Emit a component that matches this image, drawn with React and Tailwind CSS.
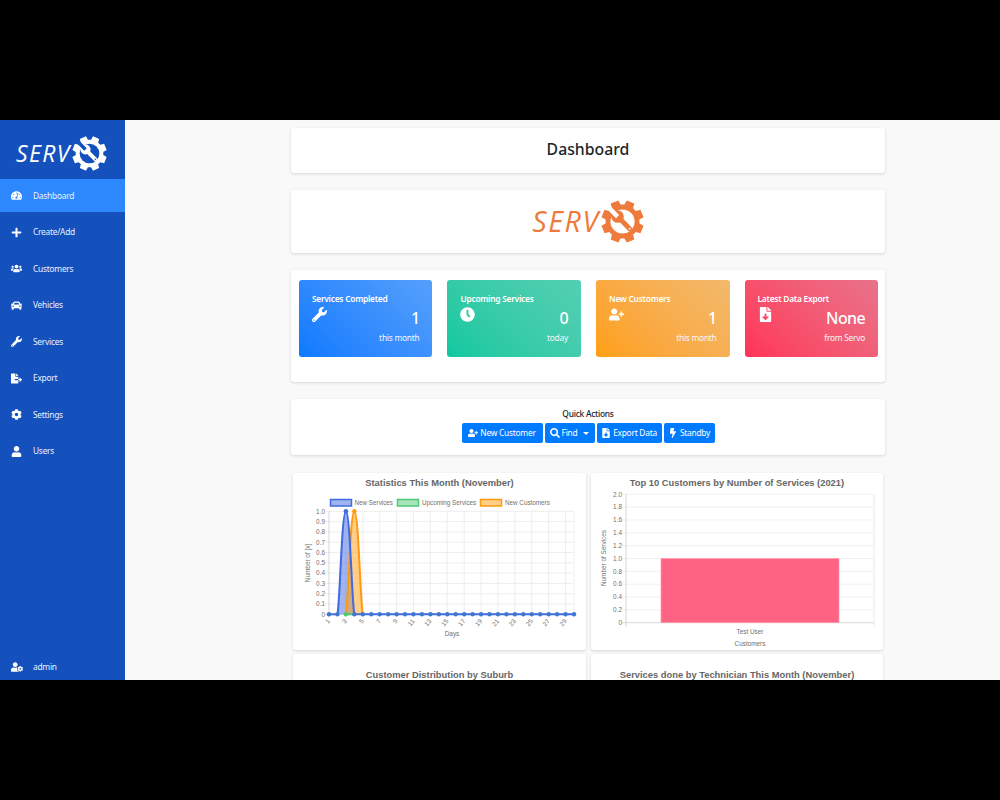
import React from "react";
import {
  FaTachometerAlt, FaPlus, FaUsers, FaCar, FaWrench, FaFileExport, FaCog, FaUser, FaUserCog,
  FaClock, FaUserPlus, FaFileDownload, FaSearch, FaBolt,
} from "react-icons/fa";

const gearPath = (() => {
  const n = 8, R = 24, r = 19;
  let d = "";
  for (let i = 0; i < n; i++) {
    const a = (i * 2 * Math.PI) / n + Math.PI / 8;
    const p = (rad, off) => `${(rad * Math.cos(a + off)).toFixed(2)} ${(rad * Math.sin(a + off)).toFixed(2)}`;
    d += `${i === 0 ? "M" : "L"}${p(r, -0.28)} L${p(R, -0.19)} L${p(R, 0.19)} L${p(r, 0.28)} `;
  }
  return d + "Z";
})();

function Gear({ color, hole, size, className }) {
  return (
    <svg viewBox="-24 -24 48 48" width={size} height={size} className={className}>
      <path d={gearPath} fill={color} />
      <circle r="13.5" fill={hole} />
      <line x1="-3" y1="-3" x2="8" y2="8" stroke={color} strokeWidth="5.5" strokeLinecap="round" />
      <circle cx="-5.5" cy="-5.5" r="7" fill={color} />
      <line x1="-5.5" y1="-5.5" x2="-14" y2="-14" stroke={hole} strokeWidth="5" />
      <circle cx="8" cy="8" r="1" fill={hole} />
    </svg>
  );
}

const nav = [
  ["Dashboard", FaTachometerAlt, true],
  ["Create/Add", FaPlus],
  ["Customers", FaUsers],
  ["Vehicles", FaCar],
  ["Services", FaWrench],
  ["Export", FaFileExport],
  ["Settings", FaCog],
  ["Users", FaUser],
];

const SMALL = "text-[8.4px] tracking-[-0.25px]";

function NavRow({ label, Icon, active }) {
  return (
    <div className={`flex items-center h-[33px] mb-[3.5px] ${active ? "bg-[#2e88fd]" : ""}`}>
      <span className="w-[33px] flex justify-center pr-[1px] text-white">
        <Icon className="w-[11px] h-[11px]" />
      </span>
      <span className={`${SMALL} pt-[1px] text-[#e9f0ff]`}>{label}</span>
    </div>
  );
}

function Sidebar() {
  return (
    <aside className="w-[125px] shrink-0 bg-[#1551bd] flex flex-col">
      <div className="h-[59px] flex items-center pl-[16px] pt-[8px] shrink-0">
        <span className="text-white italic text-[23px] font-medium leading-none tracking-[1.4px] font-['Open_Sans',sans-serif]">SERV</span>
        <Gear color="#ffffff" hole="#1551bd" size={35} className="ml-[1px]" />
      </div>
      {nav.map(([l, I, a]) => (
        <NavRow key={l} label={l} Icon={I} active={a} />
      ))}
      <div className="mt-auto flex items-center h-[27px]">
        <span className="w-[33px] flex justify-center text-white">
          <FaUserCog className="w-[12px] h-[12px]" />
        </span>
        <span className={`${SMALL} pt-[1px] text-[#e9f0ff]`}>admin</span>
      </div>
    </aside>
  );
}

function Panel({ className = "", children }) {
  return <div className={`bg-white rounded-[3px] shadow-[0_1px_3px_rgba(0,0,0,0.14)] ${className}`}>{children}</div>;
}

const stats = [
  { t: "Services Completed", I: FaWrench, v: "1", s: "this month", c: "from-[#0a7aff] to-[#549ffb]" },
  { t: "Upcoming Services", I: FaClock, v: "0", s: "today", c: "from-[#0cc8a0] to-[#53cfb2]" },
  { t: "New Customers", I: FaUserPlus, v: "1", s: "this month", c: "from-[#ff9f10] to-[#f1b96b]" },
  { t: "Latest Data Export", I: FaFileDownload, v: "None", s: "from Servo", c: "from-[#ff3158] to-[#e7728a]" },
];

function StatCard({ t, I, v, s, c }) {
  return (
    <div className={`h-[77px] rounded-[3px] bg-linear-45 ${c} text-white pt-[13px] px-[13px] flex flex-col`}>
      <div className={`${SMALL} font-semibold leading-[11px]`}>{t}</div>
      <div className="flex justify-between items-start h-[22px] mt-[2px]">
        <I className="h-[15px] w-auto mt-[1px]" />
        <span className="text-[16px] tracking-[-0.6px] font-medium leading-[22px] mt-[1px]">{v}</span>
      </div>
      <div className={`text-right ${SMALL} leading-[12px] mt-[4px] text-[#f4f7ff]`}>{s}</div>
    </div>
  );
}

function Btn({ Icon, children, caret, w }) {
  return (
    <span className={`h-[20px] ${w} bg-[#007bff] rounded-[2px] text-white ${SMALL} flex items-center justify-center gap-[2px]`}>
      <Icon className="h-[10px] w-auto" />
      {children}
      {caret && <span className="ml-[4px] w-0 h-0 border-x-[3px] border-x-transparent border-t-[3px] border-t-white" />}
    </span>
  );
}

const CT = "font-['Liberation_Sans',Arial,sans-serif] font-bold text-[9.35px] text-[#666] text-center leading-[14px]";
const svgFont = { fontFamily: "'Liberation Sans', Arial, sans-serif", fill: "#707070" };

function LineChart() {
  const x0 = 329, x1 = 574, y0 = 614.3, yT = 511.3;
  const dx = (x1 - x0) / 29;
  const X = (d) => x0 + (d - 1) * dx;
  const yTicks = ["1.0", "0.9", "0.8", "0.7", "0.6", "0.5", "0.4", "0.3", "0.2", "0.1", "0"];
  const peak = (d) =>
    `M${X(d - 1)} ${y0} C${X(d - 1) + 2.5} ${y0 - 12} ${X(d) - 4.2} ${yT} ${X(d)} ${yT} C${X(d) + 4.2} ${yT} ${X(d + 1) - 2.5} ${y0 - 12} ${X(d + 1)} ${y0}`;
  return (
    <svg viewBox="293 490 293 160" width="293" height="160" className="block">
      {yTicks.map((t, i) => {
        const y = yT + (i * (y0 - yT)) / 10;
        return (
          <g key={t}>
            <line x1={x0 - 4} x2={x1} y1={y} y2={y} stroke={i === 10 ? "#ccc" : "#eaeaea"} strokeWidth="0.8" />
            <text x={x0 - 4} y={y + 2.3} textAnchor="end" fontSize="6.4" style={svgFont}>{t}</text>
          </g>
        );
      })}
      {Array.from({ length: 15 }, (_, i) => {
        const x = X(1 + i * 2);
        return (
          <g key={i}>
            <line x1={x} x2={x} y1={yT} y2={y0 + 3} stroke={i === 0 ? "#ccc" : "#eaeaea"} strokeWidth="0.8" />
            <text transform={`translate(${x + 1.5} ${y0 + 7}) rotate(-50)`} textAnchor="end" fontSize="6.4" style={svgFont}>{1 + i * 2}</text>
          </g>
        );
      })}
      <line x1={x1} x2={x1} y1={yT} y2={y0 + 3} stroke="#eaeaea" strokeWidth="0.8" />

      <path d={peak(3) + "Z"} fill="rgba(65,105,225,0.5)" />
      <path d={peak(4) + "Z"} fill="rgba(255,159,16,0.5)" />
      <path d={peak(4)} fill="none" stroke="#ff9a10" strokeWidth="2" />
      <line x1={X(3)} x2={X(4)} y1={y0} y2={y0} stroke="#4fc878" strokeWidth="2" />
      <path d={`M${x0} ${y0} L${X(2)} ${y0}`} stroke="#4169e1" strokeWidth="2" />
      <path d={peak(3)} fill="none" stroke="#4169e1" strokeWidth="2" />
      <path d={`M${X(4)} ${y0} L${x1} ${y0}`} stroke="#4169e1" strokeWidth="2" />
      {Array.from({ length: 30 }, (_, i) => (
        <circle key={i} cx={X(i + 1)} cy={i === 2 ? yT : y0} r="2.2" fill={i === 2 ? "#4169e1" : "#3f78cf"} />
      ))}
      <circle cx={X(3)} cy={y0} r="2.2" fill="#4fc878" />
      <circle cx={X(4)} cy={yT} r="2.2" fill="#ff9a10" />

      {[
        [330.5, 354.5, "New Services", "#4169e1", "rgba(65,105,225,0.5)"],
        [397.5, 422, "Upcoming Services", "#4fc878", "rgba(79,200,120,0.5)"],
        [480.5, 505, "New Customers", "#ff9a10", "rgba(255,159,16,0.5)"],
      ].map(([bx, tx, t, s, f]) => (
        <g key={t}>
          <rect x={bx} y={499.5} width="21" height="6.5" fill={f} stroke={s} strokeWidth="1.5" />
          <text x={tx} y={505} fontSize="6.3" style={svgFont}>{t}</text>
        </g>
      ))}
      <text x={452} y={635.5} textAnchor="middle" fontSize="6.4" style={svgFont}>Days</text>
      <text transform="translate(309.5 563) rotate(-90)" textAnchor="middle" fontSize="6.4" style={svgFont}>Number of [x]</text>
    </svg>
  );
}

function BarChart() {
  const x0 = 626, x1 = 874, y0 = 622.7, yT = 494.3;
  const yTicks = ["2.0", "1.8", "1.6", "1.4", "1.2", "1.0", "0.8", "0.6", "0.4", "0.2", "0"];
  return (
    <svg viewBox="591 490 292 160" width="292" height="160" className="block">
      {yTicks.map((t, i) => {
        const y = yT + (i * (y0 - yT)) / 10;
        return (
          <g key={t}>
            <line x1={x0 - 4} x2={x1} y1={y} y2={y} stroke={i === 10 ? "#ccc" : "#eee"} strokeWidth="0.8" />
            <text x={x0 - 4} y={y + 2.3} textAnchor="end" fontSize="6.4" style={svgFont}>{t}</text>
          </g>
        );
      })}
      <line x1={x0} x2={x0} y1={yT} y2={y0 + 4} stroke="#ccc" strokeWidth="0.8" />
      <line x1={x1} x2={x1} y1={yT} y2={y0 + 4} stroke="#e4e4e4" strokeWidth="0.8" />
      <rect x={661} y={558.5} width={178} height={y0 - 558.5} fill="#ff6384" stroke="#ff9fb3" strokeWidth="0.7" />
      <text x={750} y={633.5} textAnchor="middle" fontSize="6.4" style={svgFont}>Test User</text>
      <text x={750} y={646} textAnchor="middle" fontSize="6.4" style={svgFont}>Customers</text>
      <text transform="translate(606 558) rotate(-90)" textAnchor="middle" fontSize="6.4" style={svgFont}>Number of Services</text>
    </svg>
  );
}

export default function App() {
  return (
    <div className="w-[1000px] h-[800px] bg-black flex flex-col font-['Noto_Sans',sans-serif]">
      <div className="h-[120px] shrink-0" />
      <div className="h-[560px] flex overflow-hidden">
        <Sidebar />
        <main className="flex-1 bg-[#f9f9f9] overflow-hidden pt-[8px] pl-[166px]">
          <div className="w-[594px]">
            <Panel className="h-[45px] flex items-center justify-center pb-[2px]">
              <h1 className="text-[15.8px] font-medium text-[#212529] leading-none">Dashboard</h1>
            </Panel>
            <Panel className="h-[63px] mt-[17px] flex items-center justify-center">
              <span className="text-[#ee7b3c] italic text-[28.5px] font-medium leading-none tracking-[1.6px] font-['Open_Sans',sans-serif]">SERV</span>
              <Gear color="#ee7b3c" hole="#ffffff" size={43} className="ml-[1px]" />
            </Panel>
            <Panel className="h-[112px] mt-[17px] pt-[10px] pl-[7.9px] pr-[6.9px]">
              <div className="grid grid-cols-4 gap-x-[15px]">
                {stats.map((s) => (
                  <StatCard key={s.t} {...s} />
                ))}
              </div>
            </Panel>
            <Panel className="h-[56px] mt-[17px] flex flex-col items-center pt-[9px]">
              <div className={`${SMALL} font-medium text-[#212529] leading-[12px]`}>Quick Actions</div>
              <div className="flex gap-[2px] mt-[3px]">
                <Btn Icon={FaUserPlus} w="w-[81px]">New Customer</Btn>
                <Btn Icon={FaSearch} w="w-[50px]" caret>Find</Btn>
                <Btn Icon={FaFileDownload} w="w-[65px]">Export Data</Btn>
                <Btn Icon={FaBolt} w="w-[51px]">Standby</Btn>
              </div>
            </Panel>
            <div className="grid grid-cols-[293px_292px] gap-x-[5px] gap-y-[4px] ml-[2px] mt-[18px]">
              <Panel className="h-[177px] pt-[3px]">
                <div className={CT}>Statistics This Month (November)</div>
                <LineChart />
              </Panel>
              <Panel className="h-[177px] pt-[3px]">
                <div className={CT}>Top 10 Customers by Number of Services (2021)</div>
                <BarChart />
              </Panel>
              <Panel className="h-[177px] pt-[14px]">
                <div className={CT}>Customer Distribution by Suburb</div>
              </Panel>
              <Panel className="h-[177px] pt-[14px]">
                <div className={CT}>Services done by Technician This Month (November)</div>
              </Panel>
            </div>
          </div>
        </main>
      </div>
      <div className="flex-1" />
    </div>
  );
}
